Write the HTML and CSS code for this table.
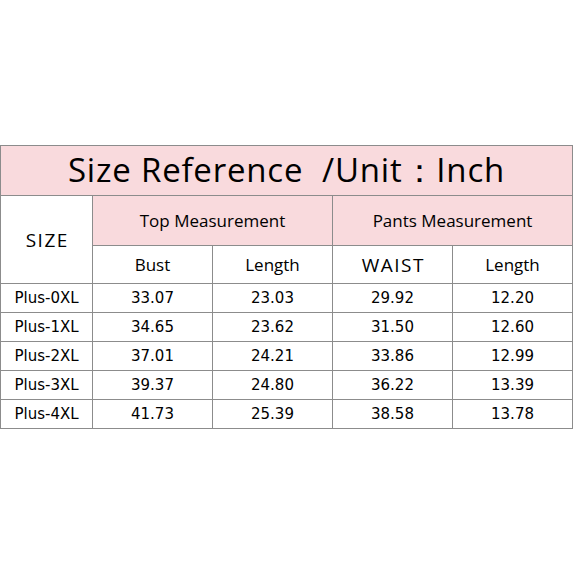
FILE: index.html
```html
<!DOCTYPE html>
<html>
<head>
<meta charset="utf-8">
<link rel="stylesheet" href="styles.css">
</head>
<body>
<div class="page">
  <table class="chart">
    <colgroup>
      <col class="c-size">
      <col class="c-val">
      <col class="c-val">
      <col class="c-val">
      <col class="c-val">
    </colgroup>
    <tr class="r-title">
      <th colspan="5" class="title">Size Reference &nbsp;/Unit：Inch</th>
    </tr>
    <tr class="r-group">
      <th rowspan="2" class="hd white caps">SIZE</th>
      <th colspan="2" class="hd pink">Top Measurement</th>
      <th colspan="2" class="hd pink">Pants Measurement</th>
    </tr>
    <tr class="r-sub">
      <th class="hd white">Bust</th>
      <th class="hd white">Length</th>
      <th class="hd white caps">WAIST</th>
      <th class="hd white">Length</th>
    </tr>
    <tr class="r-data"><td>Plus-0XL</td><td>33.07</td><td>23.03</td><td>29.92</td><td>12.20</td></tr>
    <tr class="r-data"><td>Plus-1XL</td><td>34.65</td><td>23.62</td><td>31.50</td><td>12.60</td></tr>
    <tr class="r-data"><td>Plus-2XL</td><td>37.01</td><td>24.21</td><td>33.86</td><td>12.99</td></tr>
    <tr class="r-data"><td>Plus-3XL</td><td>39.37</td><td>24.80</td><td>36.22</td><td>13.39</td></tr>
    <tr class="r-data"><td>Plus-4XL</td><td>41.73</td><td>25.39</td><td>38.58</td><td>13.78</td></tr>
  </table>
</div>
</body>
</html>
```
FILE: styles.css
```css
html, body {
  margin: 0;
  padding: 0;
  background: #ffffff;
}
.page {
  width: 573px;
  height: 573px;
  padding-top: 145px;
  box-sizing: border-box;
}
.chart {
  width: 573px;
  table-layout: fixed;
  border-collapse: collapse;
  color: #000;
}
.c-size { width: 92px; }
.c-val { width: 120px; }
.chart th, .chart td {
  border: 1px solid #8c8c8c;
  padding: 0;
  text-align: center;
  vertical-align: middle;
  font-weight: normal;
}
.title {
  height: 49px;
  background: #f9dadd;
  font-family: "Comic Sans MS", "Open Sans", "DejaVu Sans", sans-serif;
  font-size: 33px;
  letter-spacing: 0.8px;
  white-space: nowrap;
}
.hd {
  font-family: "Comic Sans MS", "Open Sans", "DejaVu Sans", sans-serif;
  font-size: 17px;
}
.caps {
  font-size: 19px;
  letter-spacing: 1.5px;
  text-indent: 1.5px;
}
.pink { background: #f9dadd; }
.white { background: #ffffff; }
.r-group th.pink { height: 49px; }
.r-sub th { height: 37px; }
.r-data td {
  height: 28px;
  font-family: "DejaVu Sans", Verdana, sans-serif;
  font-size: 15px;
}
```
